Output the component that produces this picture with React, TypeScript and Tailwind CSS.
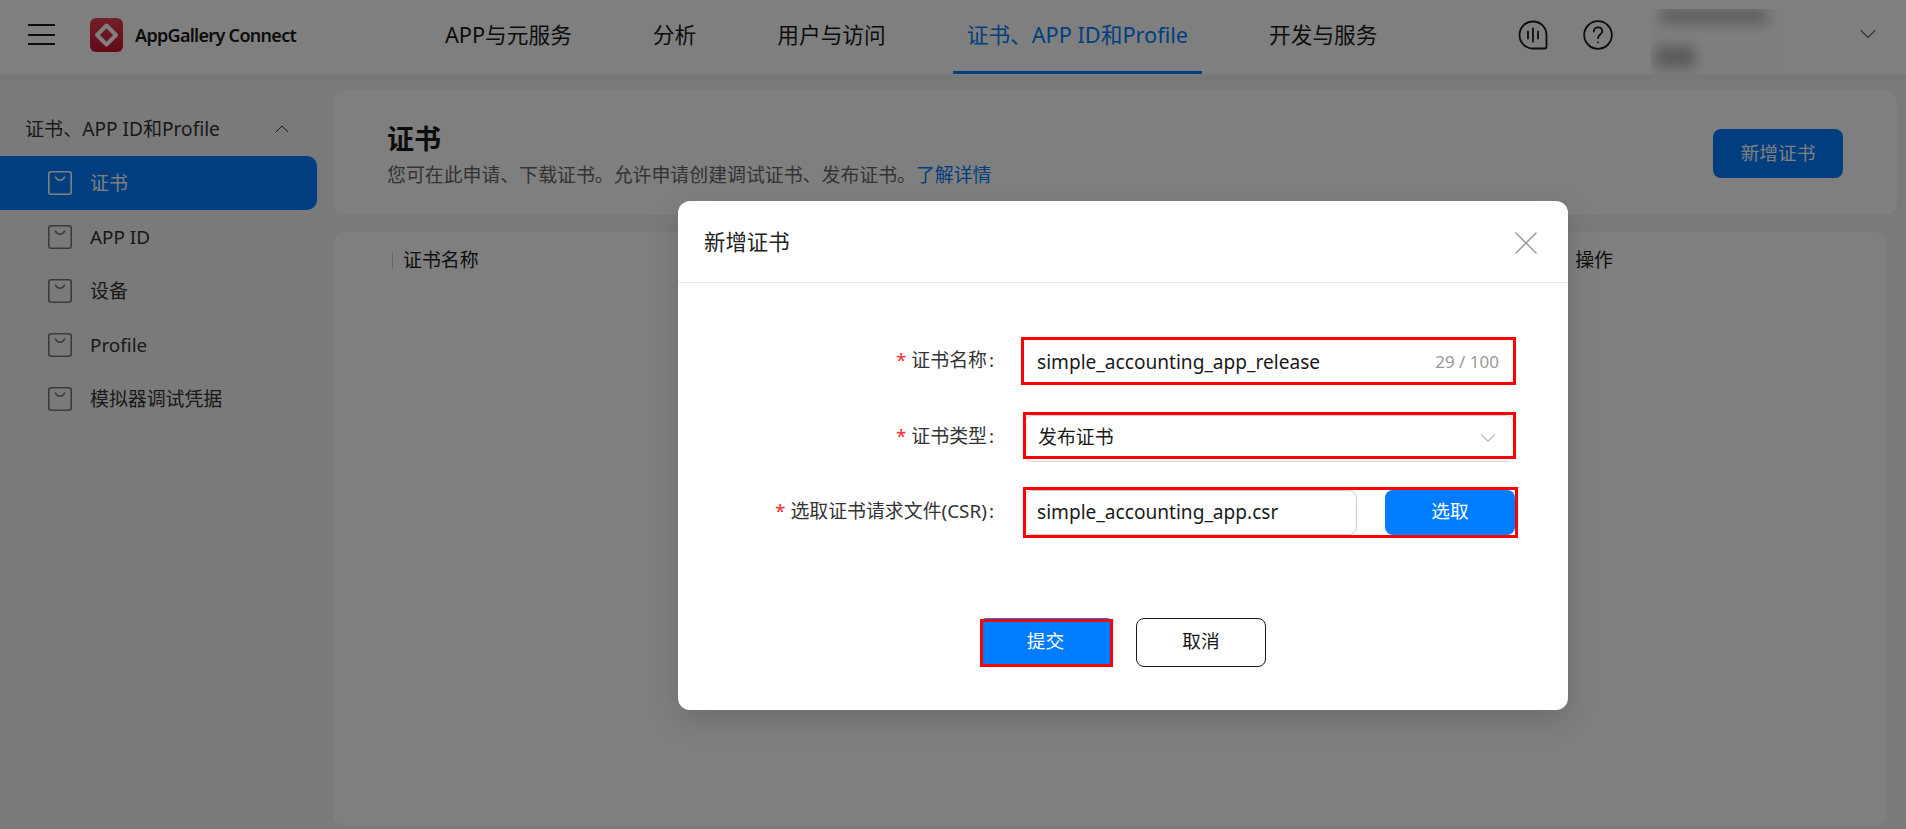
import { ChevronDown, ChevronUp, X } from "lucide-react"

const tabs = ["APP与元服务", "分析", "用户与访问", "证书、APP ID和Profile", "开发与服务"]
const menu = ["证书", "APP ID", "设备", "Profile", "模拟器调试凭据"]

function BagIcon({ color }: { color: string }) {
  return (
    <svg width="24" height="24" viewBox="0 0 24 24" fill="none" stroke={color} strokeWidth="1.6" className="shrink-0">
      <rect x="0.8" y="0.8" width="22.4" height="22.4" rx="2.5" />
      <path d="M7.5 6.2c1 2.2 2.6 3 4.5 3s3.5-.8 4.5-3" strokeLinecap="round" />
    </svg>
  )
}

function Logo() {
  return (
    <svg width="33" height="34" viewBox="0 0 33 34" className="shrink-0">
      <defs>
        <linearGradient id="logo-bg" x1="0" y1="0" x2="0" y2="1">
          <stop offset="0" stopColor="#e8404e" />
          <stop offset="1" stopColor="#c8102e" />
        </linearGradient>
      </defs>
      <rect width="33" height="34" rx="6" fill="url(#logo-bg)" />
      <path d="M16.5 7.5 26 17l-9.500 9.500L7 17z" fill="none" stroke="#fff" strokeWidth="4" strokeLinejoin="round" />
    </svg>
  )
}

// red box someone drew over the screenshot
function Annotated({ className, box, children }: { className: string; box: string; children: React.ReactNode }) {
  return (
    <div className={`relative ${className}`}>
      {children}
      <div className={`absolute border-[3px] border-[#ff0000] ${box}`} />
    </div>
  )
}

function Label({ text, className }: { text: string; className: string }) {
  return (
    <div className={`w-[318px] shrink-0 pr-[2px] text-right text-[18.900px] text-[#333] ${className}`}>
      <span className="mr-[5px] text-[#fa2a2d]">*</span>
      {text}
      <span className="ml-[2px]">:</span>
    </div>
  )
}

export default function App() {
  return (
    <div className="relative flex h-screen flex-col overflow-hidden bg-[#f4f4f4] font-['Noto_Sans','Noto_Sans_CJK_SC',sans-serif] text-[#191919]">
      {/* top bar */}
      <header className="flex h-[75px] shrink-0 items-start bg-white shadow-[0_2px_6px_rgba(0,0,0,0.04)]">
        <div className="ml-[28px] mt-[24px] flex h-[21px] w-[27px] flex-col justify-between">
          <span className="h-[2px] bg-[#191919]" />
          <span className="h-[2px] bg-[#191919]" />
          <span className="h-[2px] bg-[#191919]" />
        </div>
        <div className="ml-[35px] mt-[18px]">
          <Logo />
        </div>
        <div className="ml-[12px] mt-[18px] flex h-[34px] w-[162px] items-center whitespace-nowrap text-[18px] font-semibold tracking-[-0.7px]">
          AppGallery Connect
        </div>
        <nav className="ml-[134px] flex gap-[53px]">
          {tabs.map((t, i) => (
            <div
              key={t}
              className={`flex h-[74px] items-center whitespace-nowrap border-b-[3px] px-[14px] text-[21.700px] ${
                i === 3 ? "border-[#007dff] text-[#007dff]" : "border-transparent"
              }`}
            >
              {t}
            </div>
          ))}
        </nav>
        <svg width="30" height="30" viewBox="0 0 30 30" fill="none" stroke="#191919" strokeWidth="1.8" className="ml-[127px] mt-[20px]">
          <path d="M15 1.500C7.500 1.500 1.500 7.500 1.500 15S7.500 28.500 15 28.500h11.500c1.200 0 2-.8 2-2V15C28.500 7.500 22.500 1.500 15 1.500Z" />
          <path d="M15 8.500v13M10 11.500v7M20 11.500v7" strokeLinecap="round" />
        </svg>
        <svg width="30" height="30" viewBox="0 0 30 30" fill="none" stroke="#191919" strokeWidth="1.8" className="ml-[35px] mt-[20px]">
          <circle cx="15" cy="15" r="13.800" />
          <path d="M10.800 11.500c0-2.500 1.900-4.200 4.300-4.200s4.200 1.700 4.200 3.900c0 3.300-4.300 3.400-4.300 7" strokeLinecap="round" />
          <circle cx="15" cy="22.300" r="0.900" fill="#191919" stroke="none" />
        </svg>
        <div className="ml-[38px] mt-[9px] h-[66px] w-[127px] overflow-hidden bg-[#fdfdfd]">
          <div className="ml-[10px] h-[14px] w-[106px] bg-[#b4b4b4] blur-[7px]" />
          <div className="ml-[4px] mt-[24px] h-[20px] w-[40px] bg-[#b0b0b0] blur-[7px]" />
        </div>
        <ChevronDown className="ml-auto mr-[24px] mt-[20px] h-[28px] w-[28px] text-[#333]" strokeWidth={0.9} />
      </header>

      <div className="flex min-h-0 flex-1">
        {/* sidebar */}
        <aside className="w-[333px] shrink-0 pt-[27px]">
          <div className="flex h-[54px] items-center justify-between pl-[25px] pr-[39px] text-[19.100px] text-[#333]">
            <span>证书、APP ID和Profile</span>
            <ChevronUp className="h-[24px] w-[24px]" strokeWidth={1} />
          </div>
          {menu.map((m, i) => (
            <div
              key={m}
              className={`mr-[16px] flex h-[54px] items-center gap-[18px] rounded-r-[10px] pl-[48px] text-[18.900px] ${
                i === 0 ? "bg-[#007dff] text-white" : "text-[#333]"
              }`}
            >
              <BagIcon color={i === 0 ? "#ffffff" : "#777777"} />
              {m}
            </div>
          ))}
        </aside>

        {/* main */}
        <main className="flex min-w-0 flex-1 flex-col pb-[3px] pr-[9px] pt-[16px]">
          <div className="flex h-[124px] shrink-0 items-center justify-between rounded-[12px] bg-white pl-[54px] pr-[54px]">
            <div className="self-start pt-[29px]">
              <div className="flex h-[37px] items-center text-[27px] font-bold leading-none">证书</div>
              <div className="flex h-[37px] items-center text-[18.900px] text-[#666]">
                您可在此申请、下载证书。允许申请创建调试证书、发布证书。
                <span className="text-[18.900px] text-[#007dff]">了解详情</span>
              </div>
            </div>
            <button className="h-[49px] w-[130px] rounded-[8px] bg-[#007dff] text-[18.700px] text-white">新增证书</button>
          </div>
          <div className="mr-[10px] mt-[17px] flex min-h-0 flex-1 items-start rounded-[12px] bg-white">
            <div className="flex h-[56px] w-full items-center pl-[59px] text-[18.900px]">
              <span className="mr-[10px] h-[17px] border-l border-[#ccc]" />
              证书名称
              <span className="ml-auto mr-[274px]">操作</span>
            </div>
          </div>
        </main>
      </div>

      {/* dialog */}
      <div className="absolute inset-0 flex items-start bg-black/50 pl-[678px] pt-[201px]">
        <div className="h-[509px] w-[890px] rounded-[12px] bg-white shadow-[0_10px_30px_rgba(0,0,0,0.15)]">
          <div className="flex h-[82px] items-center justify-between border-b border-[#e5e5e5] pl-[26px] pr-[22px] pt-[2px] text-[21.400px] text-[#222]">
            新增证书
            <X className="h-[40px] w-[40px] text-[#999]" strokeWidth={0.9} />
          </div>

          <div className="flex flex-col gap-[30px] pt-[56px]">
            <div className="flex items-center">
              <Label text="证书名称" className="-mt-[4px]" />
              <Annotated
                className="ml-[28px] flex h-[46px] w-[490px] items-center justify-between rounded-[8px] pl-[13px] pr-[15px] text-[19.100px]"
                box="-left-[3px] -right-[2px] -top-[2px] bottom-0"
              >
                simple_accounting_app_release
                <span className="text-[17px] text-[#999]">29 / 100</span>
              </Annotated>
            </div>
            <div className="flex items-center">
              <Label text="证书类型" className="-mt-[4px]" />
              <Annotated
                className="ml-[28px] flex h-[47px] w-[490px] items-center justify-between rounded-[8px] border border-[#d5d5d5] pb-[2px] pl-[13px] pr-[12px] text-[18.900px]"
                box="-left-[2px] -right-[3px] -top-[4px] bottom-[2px]"
              >
                发布证书
                <ChevronDown className="h-[26px] w-[26px] text-[#bbb]" strokeWidth={1} />
              </Annotated>
            </div>
            <div className="-mt-[2px] flex items-center">
              <Label text="选取证书请求文件(CSR)" className="-mt-[2px]" />
              <Annotated
                className="ml-[28px] flex h-[45px] w-[491px] items-stretch justify-between"
                box="-left-[1px] -right-[3px] -top-[3px] -bottom-[3px]"
              >
                <div className="flex w-[333px] items-center rounded-[8px] border border-[#ccc] pl-[12px] text-[19.100px]">
                  simple_accounting_app.csr
                </div>
                <button className="w-[130px] rounded-[8px] bg-[#007dff] pb-[2px] text-[18.700px] text-white">选取</button>
              </Annotated>
            </div>
          </div>

          <div className="ml-[302px] mt-[83px] flex gap-[23px]">
            <Annotated className="h-[49px] w-[133px] rounded-t-[6px] bg-[#007dff]" box="inset-x-0 top-[1px] bottom-0">
              <button className="h-full w-full pb-[2px] pr-[2px] text-[18.700px] text-white">提交</button>
            </Annotated>
            <button className="h-[49px] w-[130px] rounded-[8px] border border-[#191919] pb-[2px] text-[18.700px]">取消</button>
          </div>
        </div>
      </div>
    </div>
  )
}
